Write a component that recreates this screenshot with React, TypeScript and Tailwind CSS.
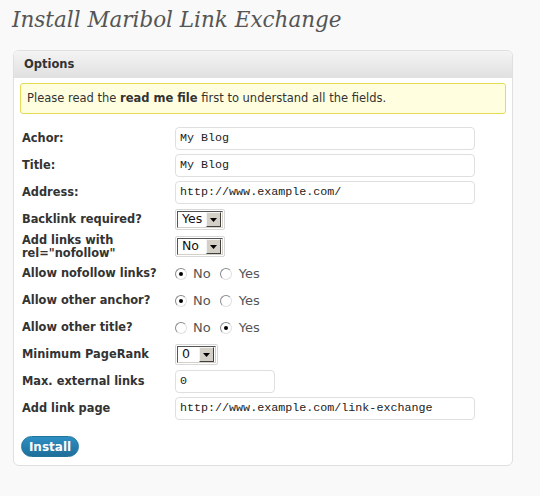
import { useState } from 'react';

const sans = "font-['DejaVu_Sans','Verdana',sans-serif]";
const mono = "font-['Liberation_Mono','Courier_New',monospace]";

function TextBox({ value, width }: { value: string; width: string }) {
  return (
    <div
      className={`${width} h-[23px] flex items-center rounded-[4px] border border-[#dfdfdf] bg-white pl-[4px] text-[11.7px] text-[#222] ${mono}`}
    >
      {value}
    </div>
  );
}

function Select({ value, width }: { value: string; width: string }) {
  return (
    <div className={`${width} h-[21px] rounded-[2px] border border-[#d8d8d8] p-px`}>
      <div className="flex h-full items-center border border-t-[#555] border-l-[#555] border-b-[#d4d0c8] border-r-[#d4d0c8] bg-white">
        <span className={`flex-1 pl-[4px] text-[12.5px] leading-none text-[#111] ${sans}`}>{value}</span>
        <span className="mr-px flex h-[15px] w-[15px] items-center justify-center border border-t-[#f4f4f4] border-l-[#f4f4f4] border-b-[#404040] border-r-[#404040] bg-[#d4d0c8]">
          <svg width="7" height="4" viewBox="0 0 7 4">
            <path d="M0 0h7L3.5 4z" fill="#000" />
          </svg>
        </span>
      </div>
    </div>
  );
}

function Radio({ checked }: { checked: boolean }) {
  return (
    <span className="flex h-[12px] w-[12px] items-center justify-center rounded-full border border-t-[#8a8a8a] border-l-[#8a8a8a] border-b-[#e0e0e0] border-r-[#e0e0e0] bg-white">
      {checked && <span className="h-[4px] w-[4px] rounded-full bg-black" />}
    </span>
  );
}

function YesNo({ yes }: { yes: boolean }) {
  return (
    <div className={`flex items-center text-[13px] text-[#555] ${sans}`}>
      <Radio checked={!yes} />
      <span className="ml-[6px] mr-[9px]">No</span>
      <Radio checked={yes} />
      <span className="ml-[7px]">Yes</span>
    </div>
  );
}

type Row = { label: React.ReactNode; field: React.ReactNode };

export default function App() {
  const [rows] = useState<Row[]>([
    { label: 'Achor:', field: <TextBox value="My Blog" width="w-[300px]" /> },
    { label: 'Title:', field: <TextBox value="My Blog" width="w-[300px]" /> },
    { label: 'Address:', field: <TextBox value="http://www.example.com/" width="w-[300px]" /> },
    { label: 'Backlink required?', field: <Select value="Yes" width="w-[50px]" /> },
    {
      label: (
        <span className="block leading-[13px]">
          Add links with
          <br />
          rel="nofollow"
        </span>
      ),
      field: <Select value="No" width="w-[50px]" />,
    },
    { label: 'Allow nofollow links?', field: <YesNo yes={false} /> },
    { label: 'Allow other anchor?', field: <YesNo yes={false} /> },
    { label: 'Allow other title?', field: <YesNo yes={true} /> },
    { label: 'Minimum PageRank', field: <Select value="0" width="w-[43px]" /> },
    { label: 'Max. external links', field: <TextBox value="0" width="w-[100px]" /> },
    { label: 'Add link page', field: <TextBox value="http://www.example.com/link-exchange" width="w-[300px]" /> },
  ]);

  return (
    <div className="h-[496px] w-[540px] overflow-hidden bg-[#f9f9f9]">
      <h2 className="pl-[12px] pt-[6px] font-['DejaVu_Serif','Georgia',serif] text-[21.5px] italic leading-[28px] text-[#555]">
        Install Maribol Link Exchange
      </h2>

      <div className="ml-[13px] mt-[16px] w-[500px] rounded-[6px] border border-[#dfdfdf] bg-white">
        <div className="flex h-[27px] items-center rounded-t-[6px] bg-gradient-to-b from-[#f4f4f4] to-[#e0e0e0] pl-[10px]">
          <h3 className={`text-[11.5px] font-bold text-[#333] ${sans}`}>Options</h3>
        </div>

        <div className="px-[6px] pb-[8px]">
          <div
            className={`mt-[5px] flex h-[31px] items-center rounded-[3px] border border-[#e6db55] bg-[#ffffe0] pl-[6px] text-[11.5px] text-[#333] ${sans}`}
          >
            <span>
              Please read the <b>read me file</b> first to understand all the fields.
            </span>
          </div>

          <div className="mt-[11px]">
            {rows.map((row, i) => (
              <div key={i} className="flex h-[27px] items-center">
                <div className={`w-[155px] pl-[2px] text-[11.4px] font-bold text-[#333] ${sans}`}>{row.label}</div>
                <div>{row.field}</div>
              </div>
            ))}
          </div>

          <button
            type="button"
            className={`ml-[1px] mt-[14px] h-[21px] w-[58px] rounded-full border border-[#21759b] bg-gradient-to-b from-[#2e8fc4] to-[#1e6f9a] text-[12px] font-bold text-white ${sans}`}
          >
            Install
          </button>
        </div>
      </div>
    </div>
  );
}
